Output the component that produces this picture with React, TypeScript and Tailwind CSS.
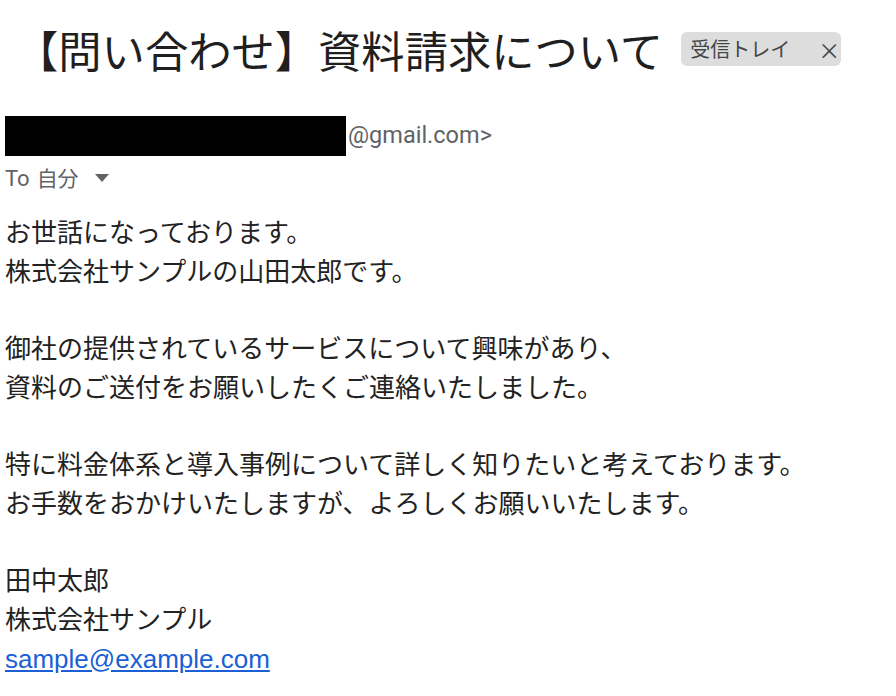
const bodyLines = [
    'お世話になっております。',
    '株式会社サンプルの山田太郎です。',
    '',
    '御社の提供されているサービスについて興味があり、',
    '資料のご送付をお願いしたくご連絡いたしました。',
    '',
    '特に料金体系と導入事例について詳しく知りたいと考えております。',
    'お手数をおかけいたしますが、よろしくお願いいたします。',
    '',
    '田中太郎',
    '株式会社サンプル',
];

const jp = "font-['Noto_Sans_CJK_JP','Noto_Sans',sans-serif]";

export default function App() {
    return (
        <div className={`w-[896px] h-[696px] bg-white overflow-hidden pl-[5px] ${jp}`}>
            {/* Subject */}
            <div className="flex items-center pt-[27px] pl-[10px]">
                <h1 className="shrink-0 h-[44px] text-[43.3px] leading-[44px] whitespace-nowrap text-[#1f1f1f]">
                    【問い合わせ】資料請求について
                </h1>
                <div className="shrink-0 whitespace-nowrap ml-[18px] flex items-center h-[34px] w-[160px] rounded-md bg-[#dddddd] pl-[9px] text-[20px] text-[#444746]">
                    <span>受信トレイ</span>
                    <span className="ml-[28px] text-[22px] leading-none">×</span>
                </div>
            </div>

            {/* Sender */}
            <div className="mt-[45px] flex items-center h-[40px]">
                <div className="w-[341px] h-[40px] bg-black" />
                <span className="ml-[2px] font-['Roboto',sans-serif] text-[23.5px] text-[#5f6368]">@gmail.com&gt;</span>
            </div>

            <div className="mt-[3px] flex items-center h-[38px] text-[21px] text-[#5f6368]">
                <span className="font-['Roboto',sans-serif] text-[22px]">To</span>
                <span className="ml-[7px]">自分</span>
                <svg className="ml-[16px]" width="14" height="8" viewBox="0 0 14 8">
                    <path d="M0 0 L14 0 L7 8 Z" fill="#5f6368" />
                </svg>
            </div>

            {/* Body */}
            <div className="mt-[15px] text-[26px] leading-[38.7px] text-[#222222]">
                {bodyLines.map((line, i) => (
                    <div key={i} className="h-[38.7px] whitespace-nowrap">
                        {line || '\u00a0'}
                    </div>
                ))}
                <div className="h-[38.7px]">
                    <a href="#" className="font-['Liberation_Sans',Arial,sans-serif] text-[#1a5fd3] underline">
                        sample@example.com
                    </a>
                </div>
            </div>
        </div>
    );
}
